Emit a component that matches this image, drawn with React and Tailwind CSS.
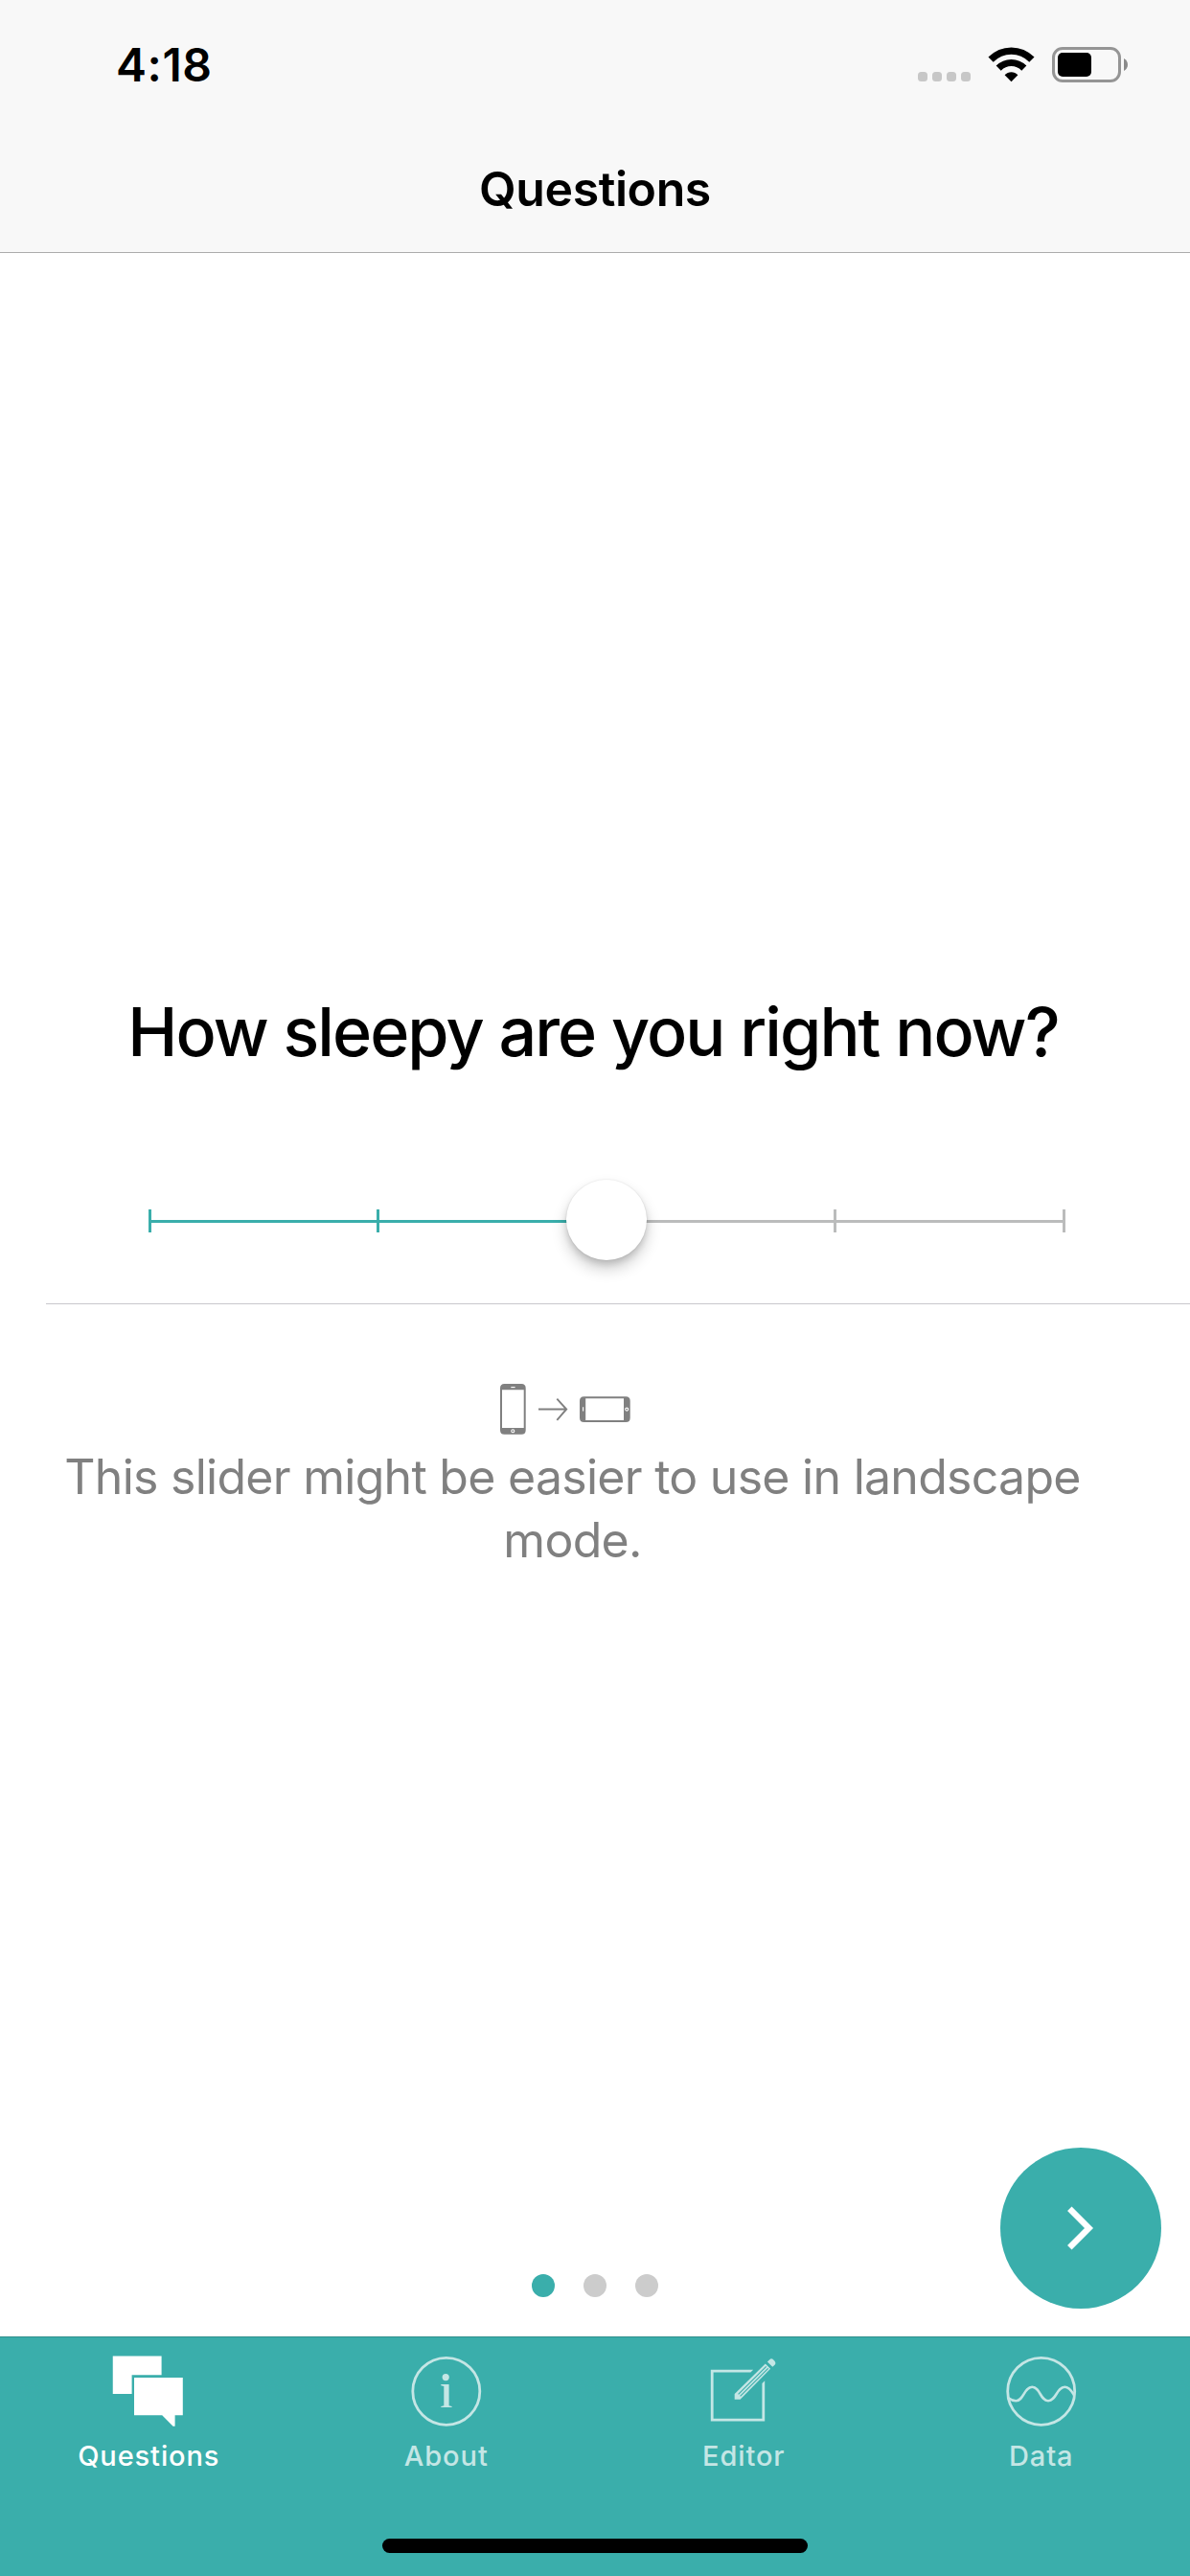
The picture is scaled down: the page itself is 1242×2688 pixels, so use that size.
const INACTIVE = "#c4e6e5";

function StatusBar() {
  return (
    <div className="flex h-[132px] items-start justify-between pl-[121px] pr-[65px]">
      <time className="mt-[44px] text-[48px] leading-[48px] font-semibold tracking-[0.6px]">4:18</time>
      <div className="mt-[49px] flex items-start">
        <div className="mt-[26px] flex gap-[5px]">
          {[0, 1, 2, 3].map((i) => (
            <span key={i} className="size-[10px] rounded-[3.5px] bg-[#c7c7c7]" />
          ))}
        </div>
        <svg className="ml-[18px]" width="49" height="37" viewBox="0 0 49 37" fill="none">
          <path d="M24.5 36.2 17.6 29.2C21.4 25.2 27.6 25.2 31.4 29.2Z" fill="#000" />
          <path d="M11.2 22.1C18.7 14.6 30.3 14.6 37.8 22.1" stroke="#000" strokeWidth="7.2" />
          <path d="M3.1 13.2C15.2 1.1 33.8 1.1 45.9 13.2" stroke="#000" strokeWidth="7.4" />
        </svg>
        <div className="ml-[18px] h-[37px] w-[72px] rounded-[11px] border-[3px] border-[#959595] p-[3px]">
          <div className="h-[25px] w-[35px] rounded-[5px] bg-black" />
        </div>
        <svg className="ml-[3px] mt-[12px]" width="4" height="13" viewBox="0 0 4 13">
          <path d="M0 0C5.3 2.4 5.3 10.6 0 13Z" fill="#8a8a8a" />
        </svg>
      </div>
    </div>
  );
}

function Header() {
  return (
    <header className="flex h-[264px] flex-none flex-col border-b border-[#acacac] bg-[#f8f8f8]">
      <StatusBar />
      <h1 className="pt-[35px] text-center text-[50px] leading-[60px] font-semibold tracking-[-0.42px]">Questions</h1>
    </header>
  );
}

function Slider() {
  return (
    <div className="relative mt-[106px] ml-[155px] h-[84px] w-[957px]">
      <div className="absolute top-[42px] left-0 h-[3px] w-full bg-[#bbbcbc]" />
      <div className="absolute top-[42px] left-0 h-[3px] w-[478px] bg-[#3aaeab]" />
      <div className="absolute top-[31px] left-0 h-[24px] w-[3px] bg-[#3aaeab]" />
      <div className="absolute top-[31px] left-[238px] h-[24px] w-[3px] bg-[#3aaeab]" />
      <div className="absolute top-[31px] left-[715px] h-[24px] w-[3px] bg-[#bbbcbc]" />
      <div className="absolute top-[31px] left-[954px] h-[24px] w-[3px] bg-[#bbbcbc]" />
      <div className="absolute top-0 left-[436px] size-[84px] rounded-full bg-white shadow-[0_0_0_1px_rgba(0,0,0,0.03),0_9px_16px_rgba(0,0,0,0.2),0_4px_6px_rgba(0,0,0,0.12)]" />
    </div>
  );
}

function Phone() {
  return (
    <>
      <path fillRule="evenodd" fill="#808080" d="M4.5 0H22.2Q26.7 0 26.7 4.5V48.2Q26.7 52.7 22.2 52.7H4.5Q0 52.7 0 48.2V4.5Q0 0 4.5 0ZM2 6.2V46H24.7V6.2Z" />
      <path d="M11.3 3.6H15.6" stroke="#fff" strokeWidth="1.1" />
      <circle cx="13.3" cy="49.2" r="1.5" fill="none" stroke="#fff" strokeWidth="1.1" />
    </>
  );
}

function RotateHint() {
  return (
    <svg className="mt-[83px] ml-[474px]" width="136" height="53" viewBox="0 0 136 53">
      <Phone />
      <path d="M40 26.5H69M59.3 15.6 69.2 26.5 59.3 37.8" fill="none" stroke="#808080" strokeWidth="1.9" />
      <g transform="translate(83 39.9) rotate(-90)">
        <Phone />
      </g>
    </svg>
  );
}

function QuestionsIcon() {
  return (
    <svg width="80" height="80" viewBox="0 0 80 80" fill="#fff">
      <path d="M2.75 3.4H53.6V23.2H22.6V43.1H2.75Z" />
      <path d="M25 26H75.8V65.3H67.6V76.7H65.6L54.2 65.3H25Z" />
    </svg>
  );
}

function AboutIcon() {
  return (
    <svg width="80" height="80" viewBox="0 0 80 80" fill={INACTIVE}>
      <circle cx="39.8" cy="40.3" r="35" fill="none" stroke={INACTIVE} strokeWidth="2.8" />
      <circle cx="39.2" cy="25.6" r="3.6" />
      <path d="M34.3 33H42.6V55.3L45.6 56V57.1H34.3V56L37.3 55.3V35L34.3 34.3Z" />
    </svg>
  );
}

function EditorIcon() {
  return (
    <svg width="80" height="80" viewBox="0 0 80 80" fill={INACTIVE}>
      <path d="M5.8 17.7H50.2L47.4 20.5H8.6V68.7H59.4V32L62.2 29.2V71.5H5.8Z" />
      <path d="M30.7 43 62.8 11.4 68.1 16.7 36.6 48.8H30.7Z" />
      <path d="M34.6 43.4 63.7 14.3M36.6 45.4 65.7 16.3" stroke="#3aaeab" strokeWidth="1.15" />
      <path d="M64.9 9.4 67.5 6.9Q69.3 5.4 71.6 7.8 74.4 10.6 72.8 12.4L70.3 14.8Z" />
    </svg>
  );
}

function DataIcon() {
  return (
    <svg width="80" height="80" viewBox="0 0 80 80" fill="none" stroke={INACTIVE} strokeWidth="2.6">
      <circle cx="39.7" cy="40.3" r="35" strokeWidth="2.8" />
      <path d="M5.6 47.2C8.4 49.4 10.6 50.2 13.3 50.2 21.5 50.2 21.8 35.8 30.3 35.8 38.8 35.8 38.5 50.2 47 50.2 55.5 50.2 55.8 35.8 64.3 35.8 69.3 35.8 72 41 74.3 44.6" />
    </svg>
  );
}

const TABS = [
  { label: "Questions", Icon: QuestionsIcon, color: "text-white" },
  { label: "About", Icon: AboutIcon, color: "text-[#c4e6e5]" },
  { label: "Editor", Icon: EditorIcon, color: "text-[#c4e6e5]" },
  { label: "Data", Icon: DataIcon, color: "text-[#c4e6e5]" },
];

function TabBar() {
  return (
    <nav className="flex h-[250px] flex-none flex-col border-t border-[#2f8e8b] bg-[#3aaeab]">
      <div className="grid grid-cols-4 pt-[16px]">
        {TABS.map(({ label, Icon, color }) => (
          <a key={label} className={`flex flex-col items-center ${color}`}>
            <Icon />
            <span className="mt-[10px] text-[29px] leading-[36px] font-medium tracking-[0.9px]">{label}</span>
          </a>
        ))}
      </div>
      <div className="mx-auto mt-auto mb-[24px] h-[15px] w-[444px] rounded-full bg-black" />
    </nav>
  );
}

export default function App() {
  return (
    <div className="flex h-[2688px] w-[1242px] flex-col overflow-hidden bg-white font-['Inter','Liberation_Sans',sans-serif] text-black">
      <Header />
      <main className="relative flex flex-1 flex-col">
        <h2 className="mt-[765px] pr-[4px] text-center text-[70px] leading-[96px] font-medium tracking-[-1.93px] whitespace-nowrap">
          How sleepy are you right now?
        </h2>
        <Slider />
        <div className="mt-[45px] ml-[48px] h-px bg-[#c8c7cc]" />
        <div className="ml-[48px] flex w-[1099px] flex-col">
          <RotateHint />
          <p className="mt-[11px] text-center text-[50px] leading-[66px] tracking-[-0.73px] text-[#808080]">
            This slider might be easier to use in landscape mode.
          </p>
        </div>
        <div className="mt-auto mb-[41px] flex justify-center gap-[30px]">
          <span className="size-[24px] rounded-full bg-[#3aaeab]" />
          <span className="size-[24px] rounded-full bg-[#cccccc]" />
          <span className="size-[24px] rounded-full bg-[#cccccc]" />
        </div>
        <button className="absolute right-[30px] bottom-[29px] size-[168px] rounded-full bg-[#3aaeab]" aria-label="Next">
          <svg width="168" height="168" viewBox="0 0 168 168" fill="none">
            <path d="M72.3 63.8 92.5 84 72.3 104.2" stroke="#fff" strokeWidth="6.4" />
          </svg>
        </button>
      </main>
      <TabBar />
    </div>
  );
}
